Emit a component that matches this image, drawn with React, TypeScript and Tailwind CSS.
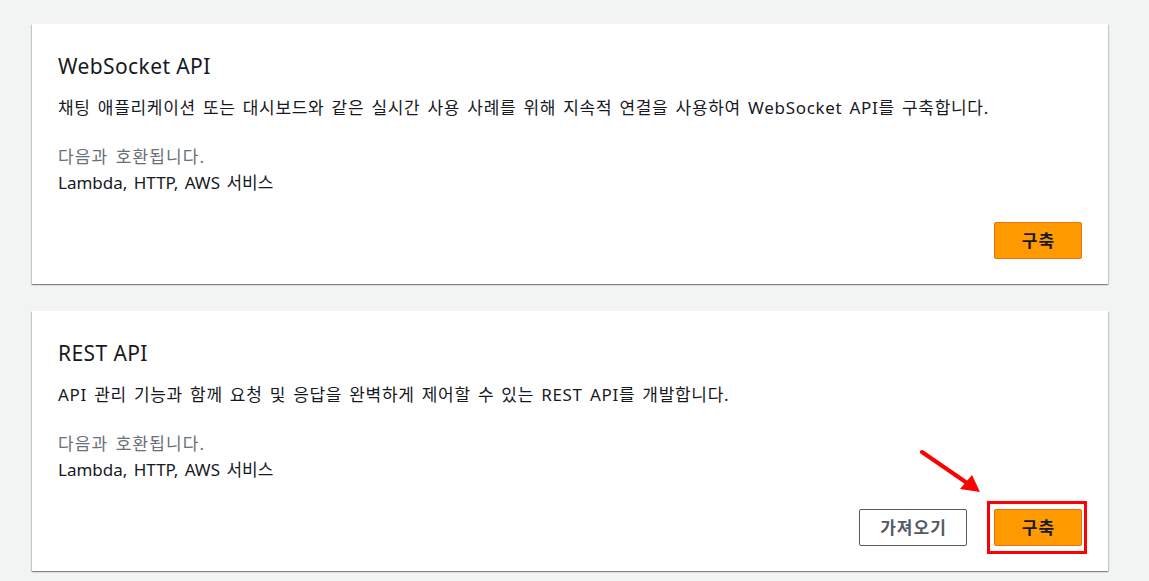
import React from 'react';

interface ApiCardProps {
  title: string;
  description: string;
  showImport?: boolean;
  highlight?: boolean;
}

const font = { fontFamily: '"Noto Sans", "Noto Sans CJK KR", sans-serif' };

function ApiCard({ title, description, showImport, highlight }: ApiCardProps) {
  return (
    <div className="relative bg-white pt-[28px] px-[26px] pb-[25px] shadow-[0_1px_1px_0_rgba(0,28,36,0.3),1px_1px_1px_0_rgba(0,28,36,0.15),-1px_1px_1px_0_rgba(0,28,36,0.15)]">
      <h2 className="text-[21px] leading-[28px] tracking-[0.4px] text-[#16191f]">{title}</h2>
      <p className="mt-[16px] text-[17px] leading-[24px] tracking-[0.7px] [word-spacing:2px] text-[#16191f]">{description}</p>
      <div className="mt-[24px] text-[17px] leading-[26px] [word-spacing:2px]">
        <div className="tracking-[1.1px] text-[#687078]">다음과 호환됩니다.</div>
        <div className="text-[#16191f]">Lambda, HTTP, AWS 서비스</div>
      </div>
      <div className="mt-[26px] flex justify-end gap-[27px]">
        {showImport && (
          <button className="h-[37px] w-[108px] rounded-[2px] border border-[#545b64] bg-white pl-[1px] text-[17px] tracking-[1px] font-bold text-[#545b64]">
            가져오기
          </button>
        )}
        <div className="relative">
          <button className="h-[37px] w-[88px] rounded-[2px] border border-[#ec7211] bg-[#ff9900] pl-[1px] text-[17px] tracking-[1px] font-bold text-[#16191f]">
            구축
          </button>
          {highlight && (
            <div className="absolute left-[-7px] top-[-8px] h-[53px] w-[100px] border-[3px] border-[#ff0000]" />
          )}
        </div>
      </div>
      {highlight && (
        <svg className="absolute left-[888px] top-[138px]" width="70" height="50" viewBox="0 0 70 50">
          <line x1="2" y1="3" x2="50" y2="36" stroke="#ff0000" strokeWidth="4" strokeLinecap="round" />
          <polygon points="60,43 40,40 52,26" fill="#ff0000" />
        </svg>
      )}
    </div>
  );
}

export default function App() {
  return (
    <div className="min-h-screen bg-[#f2f3f3] pt-[24px] pl-[32px] pr-[41px]" style={font}>
      <div className="flex flex-col gap-[27px]">
        <ApiCard
          title="WebSocket API"
          description="채팅 애플리케이션 또는 대시보드와 같은 실시간 사용 사례를 위해 지속적 연결을 사용하여 WebSocket API를 구축합니다."
        />
        <ApiCard
          title="REST API"
          description="API 관리 기능과 함께 요청 및 응답을 완벽하게 제어할 수 있는 REST API를 개발합니다."
          showImport
          highlight
        />
      </div>
    </div>
  );
}
